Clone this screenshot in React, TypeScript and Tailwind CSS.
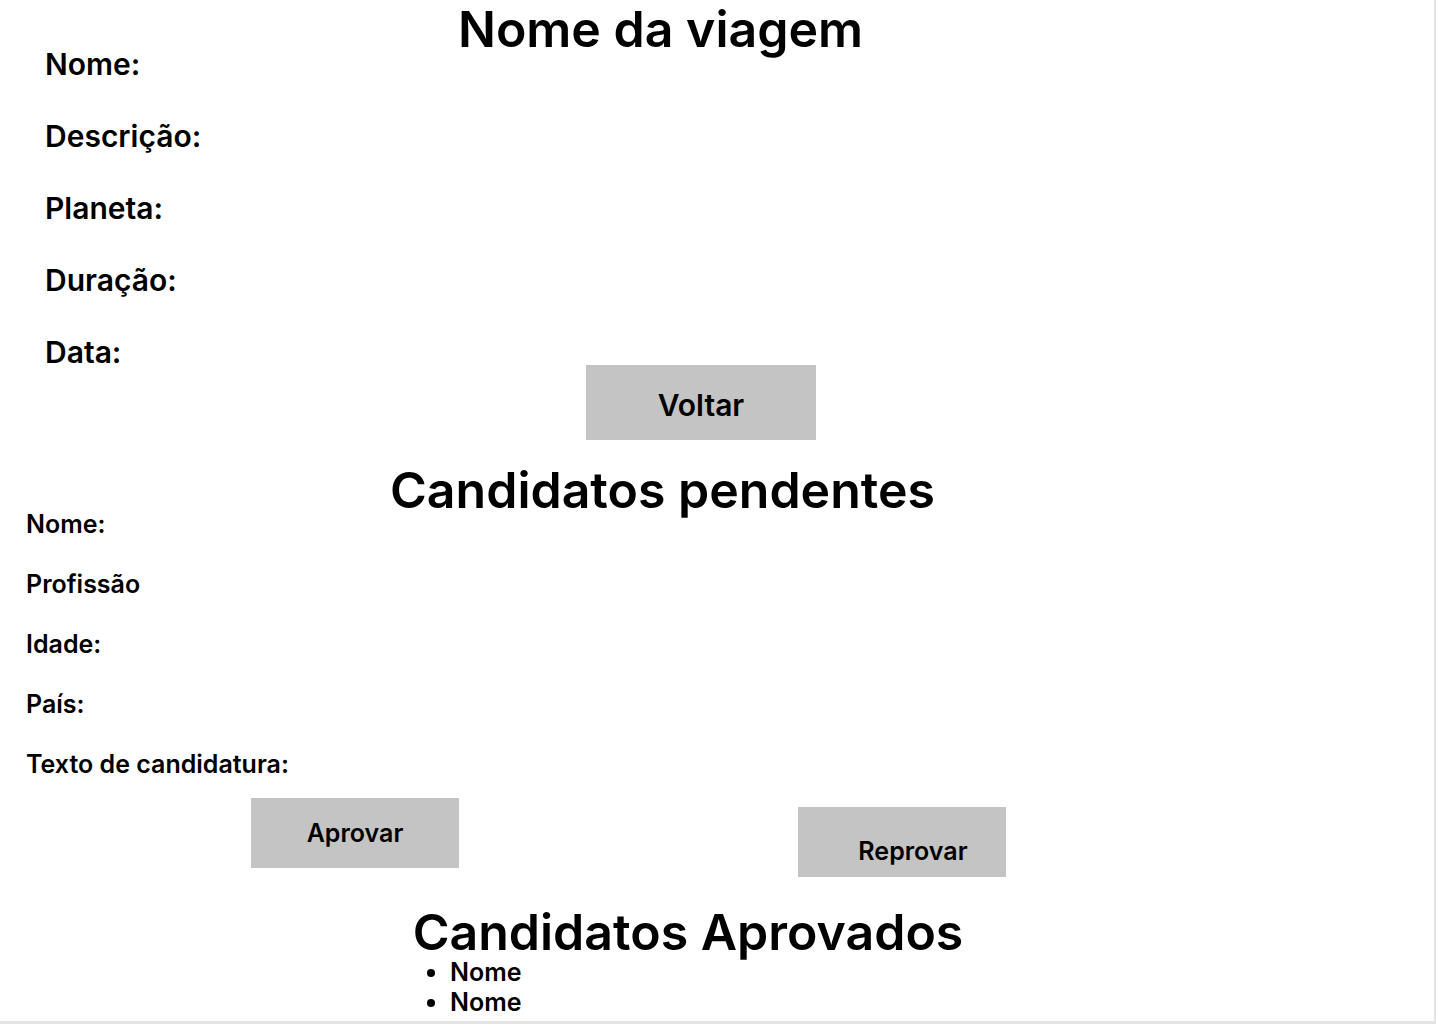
import React from "react";

const App: React.FC = () => {
  const tripFields = ["Nome:", "Descrição:", "Planeta:", "Duração:", "Data:"];
  const candidateFields = ["Nome:", "Profissão", "Idade:", "País:", "Texto de candidatura:"];
  const approved = ["Nome", "Nome"];

  return (
    <div className="w-full h-screen bg-[#e4e4e4] font-['Inter',sans-serif] text-black">
      <div className="w-[1434px] h-[1021px] bg-white overflow-hidden">
        {/* Trip details */}
        <h1 className="w-[1321px] text-center text-[50px] font-semibold leading-[58px]">
          Nome da viagem
        </h1>

        <div className="-mt-[11px] pl-[45px] flex flex-col gap-[38px]">
          {tripFields.map((field) => (
            <p key={field} className="text-[30px] font-semibold leading-[34px]">
              {field}
            </p>
          ))}
        </div>

        <button className="-mt-[4px] ml-[586px] w-[230px] h-[75px] bg-[#c4c4c4] text-[30px] font-semibold flex items-center justify-center pt-[6px]">
          Voltar
        </button>

        {/* Pending candidates */}
        <h2 className="mt-[21px] w-[1325px] text-center text-[50px] font-semibold leading-[58px]">
          Candidatos pendentes
        </h2>

        <div className="-mt-[9px] pl-[26px] flex flex-col gap-[31px]">
          {candidateFields.map((field) => (
            <p key={field} className="text-[25px] font-semibold leading-[29px]">
              {field}
            </p>
          ))}
        </div>

        <div className="mt-[19px] pl-[251px] flex items-start gap-[339px]">
          <button className="w-[208px] h-[70px] bg-[#c4c4c4] text-[25px] font-semibold flex items-center justify-center pt-[2px]">
            Aprovar
          </button>
          <button className="mt-[9px] w-[208px] h-[70px] bg-[#c4c4c4] text-[25px] font-semibold flex items-center justify-center pt-[20px] pl-[22px]">
            Reprovar
          </button>
        </div>

        {/* Approved candidates */}
        <h2 className="mt-[26px] w-[1376px] text-center text-[50px] font-semibold leading-[58px]">
          Candidatos Aprovados
        </h2>
        <ul className="-mt-[4px] pl-[450px] list-disc">
          {approved.map((name, i) => (
            <li key={i} className="text-[25px] font-semibold leading-[30px]">
              {name}
            </li>
          ))}
        </ul>
      </div>
    </div>
  );
};

export default App;
